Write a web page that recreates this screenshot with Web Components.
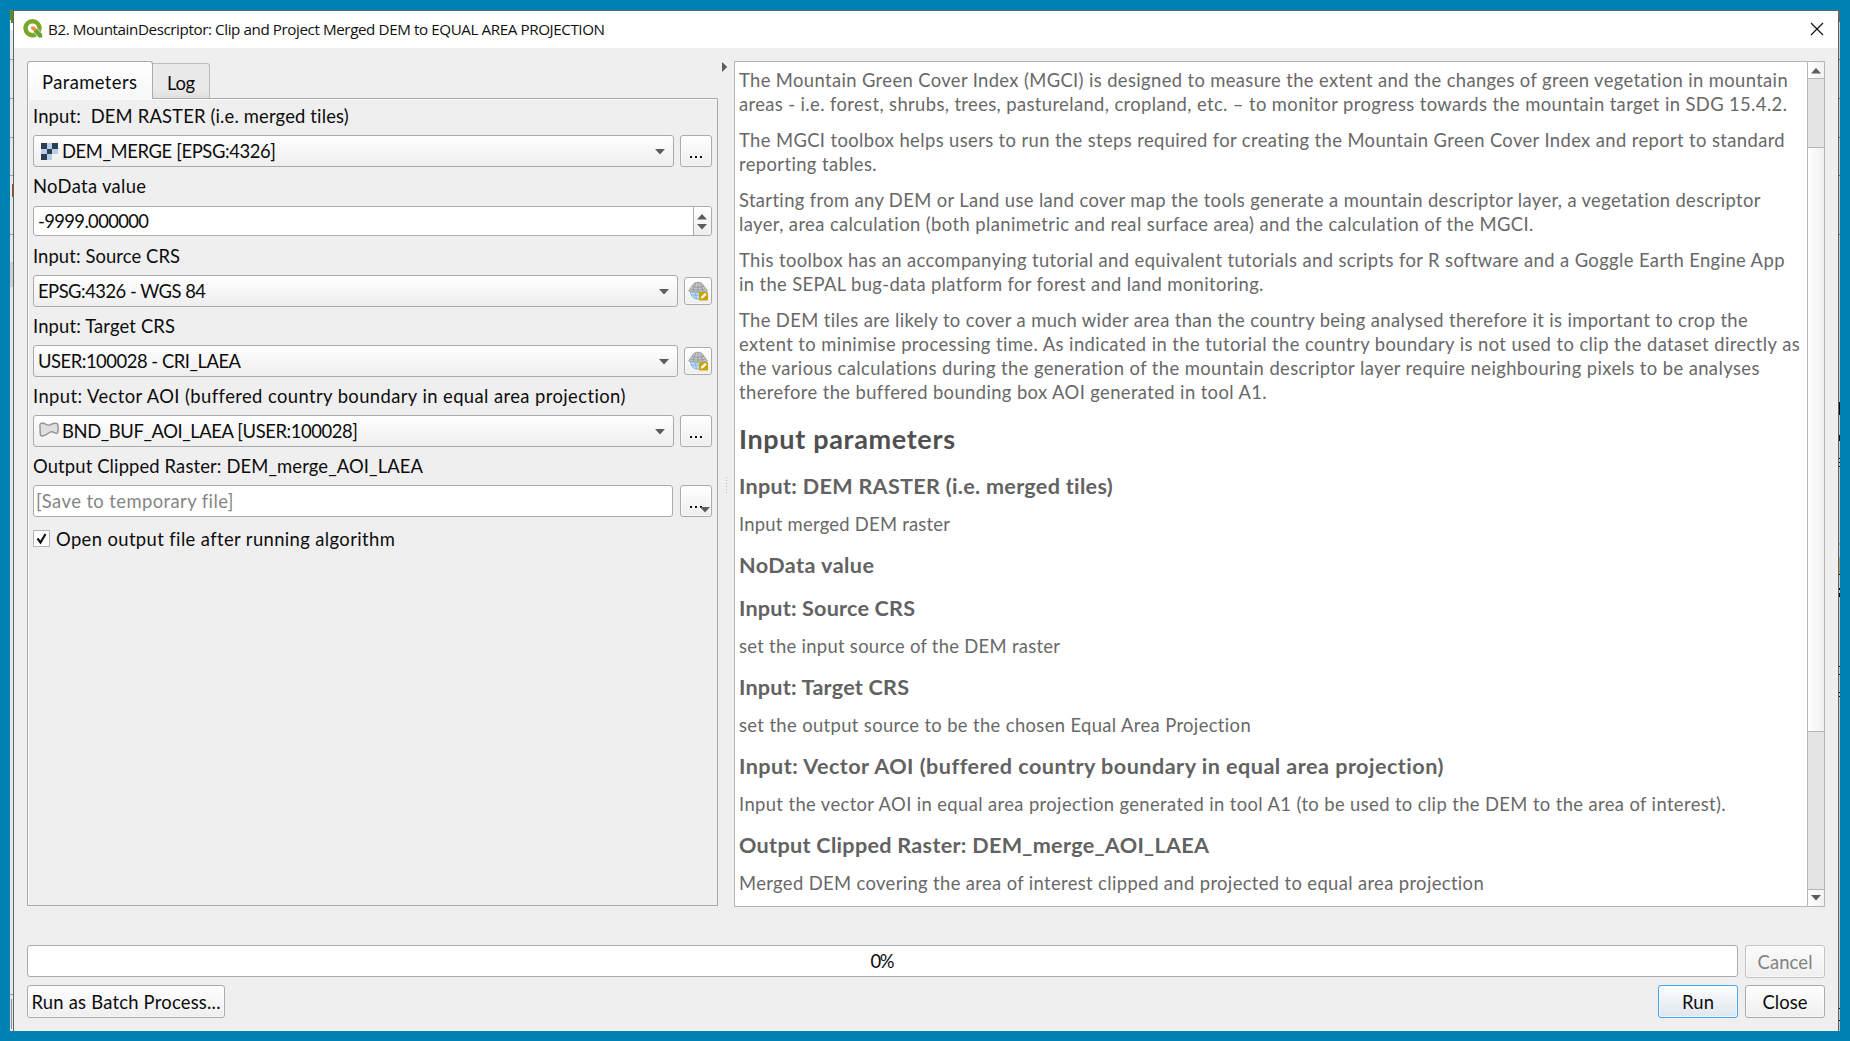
<!DOCTYPE html>
<html lang="en"><head><meta charset="utf-8"><title>B2. MountainDescriptor</title>
<style>
html,body{margin:0;height:100%;overflow:hidden}
body{background:#0082b5;font-family:Lato,"Liberation Sans",sans-serif;font-size:18.4px;color:#0c0c0c}
</style></head><body>
<tool-dialog></tool-dialog>
<script>
const define=(name,html,after)=>customElements.define(name,class extends HTMLElement{
  connectedCallback(){
    if(this.shadowRoot)return;
    const t=document.createElement('template');
    t.innerHTML=typeof html==='function'?html(this):html;
    this.attachShadow({mode:'open'}).append(t.content.cloneNode(true));
    if(after)after(this);
  }
});
const border='#ababab';

/* One line of text, tracked so that its advance equals the "w" attribute. */
define('text-line','<style>:host{display:block;white-space:pre}span{display:inline-block}</style><span><slot></slot></span>',el=>{
  const s=el.shadowRoot.querySelector('span'),w=+el.getAttribute('w');
  if(!w)return;
  const fit=()=>{s.style.letterSpacing='0';
    const n=s.getBoundingClientRect().width;
    s.style.letterSpacing=((w-n)/(el.textContent.length-1))+'px';
    s.style.marginRight=(-(w-n)/(el.textContent.length-1))+'px';};
  requestAnimationFrame(fit);
});
define('arrow-mark',el=>{
  const d={down:'M0 0H10L5 5.5Z',up:'M0 5.5H10L5 0Z',right:'M0 0V10L5.2 5Z'}[el.getAttribute('dir')];
  return `<style>:host{display:block;line-height:0;flex:none}</style><svg width="10" height="${el.getAttribute('dir')==='right'?10:6}"><path d="${d}" fill="#5c5c5c"/></svg>`;
});
define('push-button',`<style>:host{display:flex;align-items:center;justify-content:center;box-sizing:border-box;flex:none;height:33px;border:1px solid ${border};border-radius:3px;background:linear-gradient(#fff,#eee);box-shadow:inset 0 0 0 1px #ffffff90}
:host([primary]){border-color:#42a6f0;background:linear-gradient(#fcfdfe,#dfe6ed)}
:host([disabled]){border-color:#c3c3c3;color:#828282;background:linear-gradient(#fbfbfb,#efefef)}</style><slot></slot>`);
define('dots-button',el=>`<style>:host{display:block;flex:none;width:32px}push-button{height:32px;position:relative}.d{display:flex;gap:3px;padding-top:12px}i{width:2px;height:2px;background:#111}arrow-mark{position:absolute;right:1px;bottom:3px}svg{display:block}</style>
<push-button><span class="d"><i></i><i></i><i></i></span>${el.hasAttribute('menu')?'<arrow-mark dir="down"></arrow-mark>':''}</push-button>`);
define('crs-button',`<style>:host{display:block;flex:none;width:28px}push-button{height:28px}svg{display:block}</style><push-button><svg width="20" height="20" viewBox="0 0 20 20">
<path d="M2.500 10.500H17C17 15.500 14 18.200 10 18.200S2.500 15.500 2.500 10.500Z" fill="#b9dcf7" stroke="#7fb0de" stroke-width=".9"/>
<path d="M7 11.500L8.500 18M3.200 14H12" stroke="#7fb0de" stroke-width=".9" fill="none"/>
<path d="M.600 9.800L3.800 5.500C5 2.500 7.500 1.200 10 1.200S15 2.500 16.200 5.500L19.400 9.800C17 11.600 3 11.600 .600 9.800Z" fill="#c6c9c9" stroke="#8d9292" stroke-width=".8"/>
<path d="M4 5.300C7 6.700 13 6.700 16 5.300M2.600 8C7 9.400 13 9.400 17.400 8M10 1.500V11M7.500 2L5 10.500M12.500 2L15 10.500" stroke="#8d9292" stroke-width=".8" fill="none"/>
<rect x="11" y="11" width="9" height="8.500" rx=".8" fill="#c8a50b"/><path d="M12.800 17.700L13.500 15.500L17 12L18.700 13.500L15.100 17Z" fill="#fff"/></svg></push-button>`);
define('combo-box',`<style>:host{display:flex;align-items:center;flex:1;box-sizing:border-box;height:32px;border:1px solid ${border};border-radius:3px;background:linear-gradient(#fff,#eee);padding:0 8px 0 4px}.t{display:flex;flex:1;align-items:center;line-height:28px}</style><span class="t"><slot name="icon"></slot><slot></slot></span><arrow-mark dir="down"></arrow-mark>`);
define('text-field',`<style>:host{display:flex;align-items:center;flex:1;box-sizing:border-box;height:32px;border:1px solid ${border};border-radius:3px;background:#fff;padding-left:2px;color:#858585}</style><slot></slot>`);
define('spin-field',`<style>:host{display:flex;flex:1;box-sizing:border-box;height:30px;border:1px solid ${border};border-radius:3px;background:#fff;margin:1px 0;align-items:stretch;overflow:hidden}.v{flex:1;display:flex;align-items:center;padding-left:4px}.s{width:18px;border-left:1px solid ${border};display:flex;flex-direction:column;align-items:center;justify-content:space-between;padding:6px 1px 5px 0;box-sizing:border-box;background:linear-gradient(#fff,#eee)}</style><span class="v"><slot></slot></span><span class="s"><arrow-mark dir="up"></arrow-mark><arrow-mark dir="down"></arrow-mark></span>`);
define('form-row',`<style>:host{display:flex;flex-direction:column;height:70px;box-sizing:border-box;flex:none}.l{line-height:24px;height:24px;margin-bottom:7px}.c{display:flex;align-items:center;gap:var(--gap,6px);height:32px}</style><div class="l"><slot name="label"></slot></div><div class="c"><slot></slot></div>`);
define('raster-icon','<style>:host{display:block;width:17px;height:17px;margin:0 4px 0 3px}svg{display:block}</style><svg width="17" height="17" viewBox="0 0 17 17" shape-rendering="crispEdges"><path fill="#b8cfea" d="M0 0H17V11H11V17H0Z"/><path fill="#2e3e51" d="M0 0H6V6H0ZM11 0H17V6H11ZM6 6H11V11H6ZM0 11H6V17H0Z"/></svg>');
define('polygon-icon','<style>:host{display:block;width:20px;height:16px;margin:-3px 3px 0 1px}svg{display:block}</style><svg width="20" height="16" viewBox="0 0 20 16"><path d="M1 5C.500 2 1.500 1 4 1.300C7 1.700 8.500 4 11 2.800C14 1.300 18 .200 18.700 2.500C19.300 5 19.300 8 18.700 10.500C17.500 13.500 14 8.500 11.500 10C8 12 5 14.800 2.200 13.800C.300 13 1.500 8 1 5Z" fill="#dedede" stroke="#929292" stroke-width="1.400"/></svg>');
define('check-row',`<style>:host{display:flex;align-items:center;height:24px;gap:6px}.b{box-sizing:border-box;width:17px;height:17px;border:1px solid #b5b5b5;background:#fff;margin-top:-1px}svg{display:block}</style><span class="b"><svg width="15" height="15"><path d="M3.500 7.500L6.500 11.500L11.500 3" fill="none" stroke="#111" stroke-width="2.100"/></svg></span><slot></slot>`);
define('tab-label',`<style>:host{display:flex;box-sizing:border-box;align-items:center;justify-content:center;width:57px;height:35px;border:1px solid #bdbdbd;border-left:0;border-bottom:0;border-radius:0 3px 0 0;background:linear-gradient(#e9e9e9 75%,#dfdfdf);padding-top:3px}
:host([active]){width:126px;border:1px solid ${border};border-bottom:0;border-radius:3px 3px 0 0;background:linear-gradient(#fff,#f7f7f7);padding:2px 1px 0 0;margin-bottom:-1px;height:38px;z-index:1}</style><slot></slot>`);
define('tab-panel',`<style>:host{display:flex;flex-direction:column;width:691px;height:845px;flex:none}.t{display:flex;align-items:flex-end;height:37px}.p{flex:1;border:1px solid ${border};box-shadow:inset 1px 1px #fafafa;padding:5px 5px 0}</style><div class="t"><slot name="tab"></slot></div><div class="p"><slot></slot></div>`);
define('split-handle','<style>:host{display:flex;flex-direction:column;justify-content:space-between;width:16px;height:433px;flex:none;box-sizing:border-box}arrow-mark{padding:1px 0 0 3.500px}.d{margin-left:8px;width:1px;height:17px;background:repeating-linear-gradient(#b5b5b5 0 1px,transparent 1px 3px)}</style><arrow-mark dir="right"></arrow-mark><span class="d"></span>');
define('scroll-bar',`<style>:host{display:flex;flex-direction:column;width:17px;box-sizing:border-box;border-left:1px solid #b6b6b6;background:#e4e4e4;flex:none}.b{height:16px;display:flex;align-items:center;justify-content:center;background:linear-gradient(90deg,#fff,#f1f1f1);flex:none;box-sizing:border-box;padding-right:1px}.u{border-bottom:1px solid #b6b6b6;height:17px}.d{border-top:1px solid #b6b6b6;height:17px;padding-bottom:1px}.s{height:68px}.th{height:583px;border:solid #b6b6b6;border-width:1px 0;background:linear-gradient(90deg,#fff,#efefef)}.f{flex:1}</style><div class="b u"><arrow-mark dir="up"></arrow-mark></div><div class="s"></div><div class="th"></div><div class="f"></div><div class="b d"><arrow-mark dir="down"></arrow-mark></div>`);
define('help-para','<style>:host{display:block;line-height:24px;margin-bottom:12px}:host([sub]){margin:14px 0 17px}</style><slot></slot>');
define('help-heading','<style>:host{display:block;font-weight:700;font-size:21.600px;line-height:24px;color:#626262;margin-top:0}:host([big]){font-size:27px;line-height:32px;color:#505050;margin:19px 0}:host([solo]){margin-bottom:19px}</style><slot></slot>');
define('help-pane',`<style>:host{display:flex;flex:1;height:846px;box-sizing:border-box;border:1px solid #b6b6b6;background:#fff;color:#686868}.c{flex:1;padding:6px 0 0 4px;overflow:hidden}</style><div class="c"><slot></slot></div><scroll-bar></scroll-bar>`);
define('progress-box',`<style>:host{display:flex;flex:1;align-items:center;justify-content:center;box-sizing:border-box;height:32px;border:1px solid ${border};border-radius:3px;background:#fff}</style><slot></slot>`);
define('title-bar',`<style>:host{display:flex;height:37px;box-sizing:border-box;align-items:center;background:#fff;padding:0 14px 2px 9px;font:15.200px "Open Sans",sans-serif;color:#111}.t{flex:1;margin-left:5px}svg{display:block}</style>
<svg width="20" height="20" viewBox="0 0 20 20"><circle cx="9.500" cy="9.200" r="7" fill="none" stroke="#79a72b" stroke-width="4.400"/><path d="M10.500 9.500H14L19.500 15V19H16L10.500 13Z" fill="#6aa331" stroke="#fff" stroke-width=".7"/><path d="M8 7.500H11.500L13.500 10.500L11.500 12L8.500 10.500Z" fill="#f3883a"/></svg>
<text-line class="t" w="557">B2. MountainDescriptor: Clip and Project Merged DEM to EQUAL AREA PROJECTION</text-line>
<svg width="14" height="14"><path d="M1 1L13 13M13 1L1 13" stroke="#111" stroke-width="1.200"/></svg>`);
define('edge-strip',el=>el.getAttribute('side')==='left'?
`<style>:host{display:block;width:3px;flex:none}svg{display:block}</style><svg width="3" height="1021" shape-rendering="crispEdges"><path fill="#e7e7e7" d="M0 0H3V1021H0Z"/><path fill="#5f8d1d" d="M0 0H3V13H1V10H0Z"/><path fill="#fff" d="M0 13H3V20H0Z"/><path stroke="#a0a0a0" d="M0 49.500H3M0 88.500H3M0 127.500H3M0 165.500H3M0 224.500H3M0 984.500H3"/><path fill="#d0d0d0" d="M0 252H3V277H0Z"/><path fill="#a84c12" d="M2 174H3V187H2Z"/><path fill="#909090" d="M1 989H2V1019H1Z"/></svg>`:
`<style>:host{display:block;width:1px;flex:none}svg{display:block}</style><svg width="1" height="1021" shape-rendering="crispEdges"><path fill="#c8c8c8" d="M0 0H1V1021H0Z"/><path fill="#666" d="M0 0H1V12H0ZM0 49H1V50H0ZM0 88H1V89H0ZM0 127H1V128H0ZM0 165H1V166H0ZM0 224H1V225H0Z"/><path fill="#080808" d="M0 392H1V405H0ZM0 425H1V431H0ZM0 448H1V449H0ZM0 452H1V453H0ZM0 456H1V457H0ZM0 564H1V565H0ZM0 578H1V580H0ZM0 583H1V587H0ZM0 656H1V657H0ZM0 664H1V665H0ZM0 682H1V683H0ZM0 686H1V687H0ZM0 998H1V999H0ZM0 1010H1V1011H0Z"/><path fill="#b99d5e" d="M0 533H1V535H0ZM0 547H1V564H0Z"/></svg>`);

define('tool-dialog',`<style>
:host{display:flex;width:1830px;height:1021px;margin:10px}
.w{flex:1;border:1px solid #5d6467;border-bottom:0;box-sizing:border-box;background:#efefef;display:flex;flex-direction:column}
.b{display:flex;padding:13px 13px 0;height:884px;box-sizing:border-box}
.r{display:flex;padding:0 13px;gap:7px;justify-content:flex-end;height:40px}
.g{flex:1}.crs{--gap:6px}
</style>
<edge-strip side="left"></edge-strip>
<div class="w"><title-bar></title-bar>
<div class="b">
<tab-panel>
<tab-label slot="tab" active><text-line w="95">Parameters</text-line></tab-label><tab-label slot="tab"><text-line w="28">Log</text-line></tab-label>
<form-row><text-line slot="label" w="316">Input:  DEM RASTER (i.e. merged tiles)</text-line><combo-box><raster-icon slot="icon"></raster-icon><text-line w="214">DEM_MERGE [EPSG:4326]</text-line></combo-box><dots-button></dots-button></form-row>
<form-row><text-line slot="label" w="113">NoData value</text-line><spin-field><text-line w="111">-9999.000000</text-line></spin-field></form-row>
<form-row class="crs"><text-line slot="label" w="147">Input: Source CRS</text-line><combo-box><text-line w="168">EPSG:4326 - WGS 84</text-line></combo-box><crs-button></crs-button></form-row>
<form-row class="crs"><text-line slot="label" w="142">Input: Target CRS</text-line><combo-box><text-line w="203">USER:100028 - CRI_LAEA</text-line></combo-box><crs-button></crs-button></form-row>
<form-row><text-line slot="label" w="592">Input: Vector AOI (buffered country boundary in equal area projection)</text-line><combo-box><polygon-icon slot="icon"></polygon-icon><text-line w="296">BND_BUF_AOI_LAEA [USER:100028]</text-line></combo-box><dots-button></dots-button></form-row>
<form-row style="--gap:7px"><text-line slot="label" w="390">Output Clipped Raster: DEM_merge_AOI_LAEA</text-line><text-field><text-line w="197">[Save to temporary file]</text-line></text-field><dots-button menu></dots-button></form-row>
<check-row style="margin-top:3px"><text-line w="338">Open output file after running algorithm</text-line></check-row>
</tab-panel>
<split-handle></split-handle>
<help-pane>
<help-para><text-line w="1049">The Mountain Green Cover Index (MGCI) is designed to measure the extent and the changes of green vegetation in mountain</text-line><text-line w="1048">areas - i.e. forest, shrubs, trees, pastureland, cropland, etc. – to monitor progress towards the mountain target in SDG 15.4.2.</text-line></help-para>
<help-para><text-line w="1046">The MGCI toolbox helps users to run the steps required for creating the Mountain Green Cover Index and report to standard</text-line><text-line w="138">reporting tables.</text-line></help-para>
<help-para><text-line w="1022">Starting from any DEM or Land use land cover map the tools generate a mountain descriptor layer, a vegetation descriptor</text-line><text-line w="795">layer, area calculation (both planimetric and real surface area) and the calculation of the MGCI.</text-line></help-para>
<help-para><text-line w="1045">This toolbox has an accompanying tutorial and equivalent tutorials and scripts for R software and a Goggle Earth Engine App</text-line><text-line w="524">in the SEPAL bug-data platform for forest and land monitoring.</text-line></help-para>
<help-para><text-line w="1009">The DEM tiles are likely to cover a much wider area than the country being analysed therefore it is important to crop the</text-line><text-line w="1061">extent to minimise processing time. As indicated in the tutorial the country boundary is not used to clip the dataset directly as</text-line><text-line w="1021">the various calculations during the generation of the mountain descriptor layer require neighbouring pixels to be analyses</text-line><text-line w="527">therefore the buffered bounding box AOI generated in tool A1.</text-line></help-para>
<help-heading big><text-line w="216">Input parameters</text-line></help-heading>
<help-heading><text-line w="374">Input: DEM RASTER (i.e. merged tiles)</text-line></help-heading>
<help-para sub><text-line w="211">Input merged DEM raster</text-line></help-para>
<help-heading solo><text-line w="135">NoData value</text-line></help-heading>
<help-heading><text-line w="176">Input: Source CRS</text-line></help-heading>
<help-para sub><text-line w="321">set the input source of the DEM raster</text-line></help-para>
<help-heading><text-line w="170">Input: Target CRS</text-line></help-heading>
<help-para sub><text-line w="512">set the output source to be the chosen Equal Area Projection</text-line></help-para>
<help-heading><text-line w="704">Input: Vector AOI (buffered country boundary in equal area projection)</text-line></help-heading>
<help-para sub><text-line w="987">Input the vector AOI in equal area projection generated in tool A1 (to be used to clip the DEM to the area of interest).</text-line></help-para>
<help-heading><text-line w="470">Output Clipped Raster: DEM_merge_AOI_LAEA</text-line></help-heading>
<help-para sub><text-line w="745">Merged DEM covering the area of interest clipped and projected to equal area projection</text-line></help-para>
</help-pane>
</div>
<div style="height:13px"></div>
<div class="r"><progress-box><text-line w="24">0%</text-line></progress-box><push-button disabled style="width:80px"><text-line w="55">Cancel</text-line></push-button></div>
<div class="r"><push-button style="width:198px"><text-line w="189">Run as Batch Process...</text-line></push-button><span class="g"></span><push-button primary style="width:80px"><text-line w="32">Run</text-line></push-button><push-button style="width:80px"><text-line w="45">Close</text-line></push-button></div>
</div>
<edge-strip side="right"></edge-strip>`);
</script></body></html>
